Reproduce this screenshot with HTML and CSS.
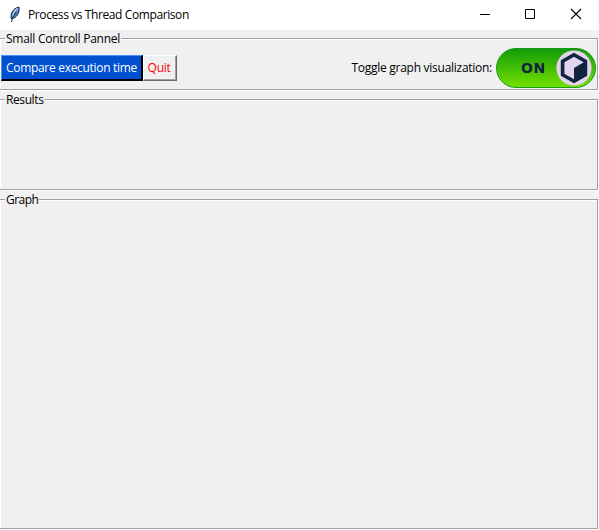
FILE: index.html
```html
<!DOCTYPE html>
<html lang="en">
<head>
<meta charset="utf-8">
<title>Process vs Thread Comparison</title>
<link rel="stylesheet" href="styles.css">
</head>
<body>
<div class="window">
  <header class="titlebar">
    <svg class="feather" width="12" height="17" viewBox="0 0 12 17">
      <path d="M2.2 12.5C1.3 7.5 4 2.5 9.8 1C11 4 9 10.5 4.6 12.2Z" fill="#4f89c9" stroke="#17202b" stroke-width="1"/>
      <path d="M8.8 2.2C6 4 4.4 7 3.8 10.5" fill="none" stroke="#a9cef1" stroke-width="1.3"/>
      <path d="M7.3 6L3.4 12L2.6 16" fill="none" stroke="#17202b" stroke-width="1"/>
    </svg>
    <h1 class="title">Process vs Thread Comparison</h1>
    <div class="controls">
      <svg width="46" height="30" viewBox="0 0 46 30"><path d="M19 14.5H29" stroke="#000"/></svg>
      <svg width="46" height="30" viewBox="0 0 46 30"><path d="M18.5 9.5H27.5V18.5H18.5Z" fill="none" stroke="#000"/></svg>
      <svg width="46" height="30" viewBox="0 0 46 30"><path d="M18 9L28 19M28 9L18 19" stroke="#000" stroke-width="1.1"/></svg>
    </div>
  </header>
  <section class="frame panel">
    <h2 class="legend">Small Controll Pannel</h2>
    <div class="row">
      <button class="btn compare">Compare execution time</button>
      <button class="btn quit">Quit</button>
      <span class="label">Toggle graph visualization:</span>
      <div class="toggle">
        <span class="on">ON</span>
        <svg class="knob" width="36" height="36" viewBox="0 0 36 36">
          <circle cx="18" cy="18" r="17.6" fill="#e2d3ee"/>
          <path d="M18 4.8L29.4 11.2V24.8L18 31.2L6.6 24.8V11.2Z" fill="#e2d3ee" stroke="#10233f" stroke-width="3.6"/>
          <path d="M18 18L30 11V25L18 32Z" fill="#10233f"/>
        </svg>
      </div>
    </div>
  </section>
  <section class="frame results">
    <h2 class="legend">Results</h2>
  </section>
  <section class="frame graph">
    <h2 class="legend">Graph</h2>
  </section>
</div>
</body>
</html>
```
FILE: styles.css
```css
* { box-sizing: border-box; }
body {
  margin: 0;
  overflow: hidden;
  background: #f0f0f0;
  color: #000;
  font: 12px/16px "Open Sans", "Noto Sans", sans-serif;
}
.window { display: flex; flex-direction: column; width: 599px; height: 530px; }
.titlebar { display: flex; align-items: center; flex: none; height: 30px; padding-left: 9px; margin-bottom: 8px; background: #fff; }
.feather { margin: -2px 7px 0 0; }
.title, .legend { margin: 0; font-size: 12px; font-weight: 400; white-space: nowrap; }
.title { line-height: 16px; letter-spacing: -0.4px; }
.controls { display: flex; margin-left: auto; }
.frame {
  flex: none;
  width: 598px;
  border: solid #a0a0a0;
  border-width: 1px 1px 1px 0;
  box-shadow: inset 1px 1px #fff, 1px 1px #fff;
}
.panel { height: 52px; margin-bottom: 9px; }
.results { height: 91px; margin-bottom: 9px; }
.graph { height: 330px; }
.legend { width: max-content; height: 16px; margin: -8px 0 0 5px; padding: 0 1px; background: #f0f0f0; line-height: 16px; letter-spacing: -0.27px; }
.results .legend { letter-spacing: -0.4px; }
.graph .legend { letter-spacing: -0.55px; }
.row { display: flex; align-items: center; height: 42px; padding: 0 1px 0 1px; }
.btn { height: 26px; padding: 0; border: 2px solid; font: inherit; line-height: 20px; letter-spacing: -0.3px; white-space: nowrap; }
.compare { width: 142px; background: #0050d0; color: #fff; border-width: 1px 2px 2px 1px; border-color: #4a90ff #000 #000 #4a90ff; }
.quit {
  width: 34px;
  padding: 0 2px 1px 0;
  border-width: 1px;
  border-color: #fff #696969 #696969 #fff;
  background: #f0f0f0;
  box-shadow: inset -1px -1px #a0a0a0;
  color: #f00;
}
.label { margin-left: auto; margin-right: 4px; letter-spacing: -0.27px; white-space: nowrap; }
.toggle {
  display: flex;
  align-items: center;
  width: 100px;
  height: 40px;
  padding-left: 24px;
  border: 1px solid #16991c;
  border-radius: 20px;
  background: linear-gradient(#149c08, #72e000);
}
.on { width: 35px; color: #10233f; font: 700 14px/20px "DejaVu Sans", sans-serif; letter-spacing: 0.6px; }
.knob { flex: none; margin-top: -1px; }
```
